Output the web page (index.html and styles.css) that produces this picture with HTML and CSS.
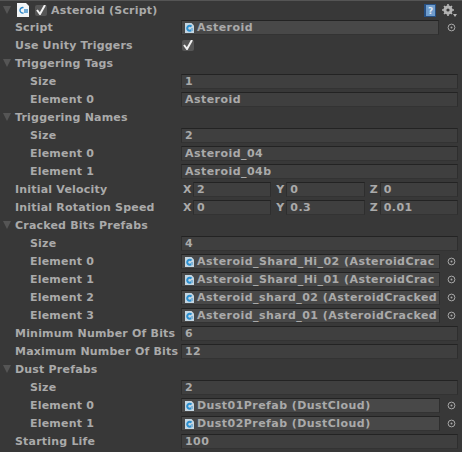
FILE: index.html

```html
<!DOCTYPE html>
<html lang="en">
  <head>
    <meta charset="UTF-8" />
    <title>Asteroid (Script)</title>
    <link rel="stylesheet" href="styles.css">
  </head>
  <body>
    <svg width="0" height="0" class="defs">
      <symbol id="cs" viewBox="0 0 9 10">
        <path d="M0 0h6.5L9 2.500V10H0z" fill="#c4d6e2"/>
        <path d="M6.500 3.500A2.500 2.500 0 1 0 6.500 7" fill="none" stroke="#2a8fd0" stroke-width="2"/>
        <path d="M6 5h2v3H6z" fill="#7fb4d8"/>
      </symbol>
      <symbol id="pick" viewBox="0 0 9 9">
        <circle cx="4.500" cy="4.500" r="3.400" fill="none" stroke="#a8a8a8"/>
        <circle cx="4.500" cy="4.500" r="1" fill="#a8a8a8"/>
      </symbol>
    </svg>

    <div class="inspector">
      <div class="header">
        <span class="arrow"></span>
        <svg class="header-script" width="12" height="14" viewBox="0 0 12 14">
          <path d="M0 0h9l3 3v11H0z" fill="#f2f5f7"/>
          <path d="M6.500 4.600A2.800 2.800 0 1 0 6.500 10" fill="none" stroke="#2a86c8" stroke-width="1.400"/>
          <path d="M8 6v4M10 6v4M7 7h4M7 9h4" stroke="#2a86c8" stroke-width=".8"/>
        </svg>
        <span class="check">
          <svg width="10" height="10" viewBox="0 0 10 10"><path d="M1 5l3 4 5-9" fill="none" stroke="#f0f0f0" stroke-width="2"/></svg>
        </span>
        <span class="header-title">Asteroid (Script)</span>
        <svg class="help" width="12" height="13" viewBox="0 0 12 13">
          <rect width="12" height="13" fill="#264f82"/>
          <rect x="2" y="1" width="9" height="11" fill="#6f9ccc"/>
          <text x="4" y="10" class="help-mark">?</text>
        </svg>
        <svg class="gear" width="15" height="13" viewBox="0 0 15 13">
          <circle cx="6" cy="6" r="3.400" fill="none" stroke="#b4b4b4" stroke-width="2.400"/>
          <path d="M6 0v12M0 6h12M2 2l8 8M10 2l-8 8" stroke="#b4b4b4" stroke-width="1.600"/>
          <circle cx="6" cy="6" r="1.600" fill="#383838"/>
          <path d="M11 10h4l-2 3z" fill="#b4b4b4"/>
        </svg>
      </div>

      <div class="row">
        <span class="label">Script</span>
        <span class="field obj script-field"><svg class="cs"><use href="#cs"/></svg>Asteroid</span>
        <svg class="picker"><use href="#pick"/></svg>
      </div>
      <div class="row">
        <span class="label">Use Unity Triggers</span>
        <span class="check check-field">
          <svg width="10" height="10" viewBox="0 0 10 10"><path d="M1 5l3 4 5-9" fill="none" stroke="#f0f0f0" stroke-width="2"/></svg>
        </span>
      </div>

      <div class="row"><span class="arrow"></span><span class="label fold">Triggering Tags</span></div>
      <div class="row"><span class="label sub">Size</span><span class="field">1</span></div>
      <div class="row"><span class="label sub">Element 0</span><span class="field">Asteroid</span></div>

      <div class="row"><span class="arrow"></span><span class="label fold">Triggering Names</span></div>
      <div class="row"><span class="label sub">Size</span><span class="field">2</span></div>
      <div class="row"><span class="label sub">Element 0</span><span class="field">Asteroid_04</span></div>
      <div class="row"><span class="label sub">Element 1</span><span class="field">Asteroid_04b</span></div>

      <div class="row">
        <span class="label">Initial Velocity</span>
        <div class="vector">
          <span class="axis">X</span><span class="field">2</span>
          <span class="axis">Y</span><span class="field">0</span>
          <span class="axis">Z</span><span class="field">0</span>
        </div>
      </div>
      <div class="row">
        <span class="label">Initial Rotation Speed</span>
        <div class="vector">
          <span class="axis">X</span><span class="field">0</span>
          <span class="axis">Y</span><span class="field">0.3</span>
          <span class="axis">Z</span><span class="field">0.01</span>
        </div>
      </div>

      <div class="row"><span class="arrow"></span><span class="label fold">Cracked Bits Prefabs</span></div>
      <div class="row"><span class="label sub">Size</span><span class="field">4</span></div>
      <div class="row">
        <span class="label sub">Element 0</span>
        <span class="field obj"><svg class="cs"><use href="#cs"/></svg>Asteroid_Shard_Hi_02 (AsteroidCrac</span>
        <svg class="picker"><use href="#pick"/></svg>
      </div>
      <div class="row">
        <span class="label sub">Element 1</span>
        <span class="field obj"><svg class="cs"><use href="#cs"/></svg>Asteroid_Shard_Hi_01 (AsteroidCrac</span>
        <svg class="picker"><use href="#pick"/></svg>
      </div>
      <div class="row">
        <span class="label sub">Element 2</span>
        <span class="field obj"><svg class="cs"><use href="#cs"/></svg>Asteroid_shard_02 (AsteroidCracked</span>
        <svg class="picker"><use href="#pick"/></svg>
      </div>
      <div class="row">
        <span class="label sub">Element 3</span>
        <span class="field obj"><svg class="cs"><use href="#cs"/></svg>Asteroid_shard_01 (AsteroidCracked</span>
        <svg class="picker"><use href="#pick"/></svg>
      </div>

      <div class="row"><span class="label">Minimum Number Of Bits</span><span class="field">6</span></div>
      <div class="row"><span class="label">Maximum Number Of Bits</span><span class="field">12</span></div>

      <div class="row"><span class="arrow"></span><span class="label fold">Dust Prefabs</span></div>
      <div class="row"><span class="label sub">Size</span><span class="field">2</span></div>
      <div class="row">
        <span class="label sub">Element 0</span>
        <span class="field obj"><svg class="cs"><use href="#cs"/></svg>Dust01Prefab (DustCloud)</span>
        <svg class="picker"><use href="#pick"/></svg>
      </div>
      <div class="row">
        <span class="label sub">Element 1</span>
        <span class="field obj"><svg class="cs"><use href="#cs"/></svg>Dust02Prefab (DustCloud)</span>
        <svg class="picker"><use href="#pick"/></svg>
      </div>

      <div class="row"><span class="label">Starting Life</span><span class="field">100</span></div>
    </div>
  </body>
</html>
```

FILE: styles.css

```css
html,
body {
  margin: 0;
  height: 100%;
  background-color: #383838;
  overflow: hidden;
}
.defs {
  display: block;
  height: 0;
}
.inspector {
  width: 462px;
  height: 452px;
  box-sizing: border-box;
  border-top: 1px solid #555;
  font-family: "DejaVu Sans", sans-serif;
  font-size: 11px;
  font-weight: bold;
  letter-spacing: 0.2px;
  color: #aaa;
}
.header {
  display: flex;
  align-items: center;
  height: 17px;
  padding: 1px 5px 0 0;
  box-sizing: border-box;
}
.header-script {
  margin-left: 6px;
}
.header .check {
  margin-left: 6px;
}
.header-title {
  margin-left: 4px;
  flex: 1;
}
.help-mark {
  font-size: 9px;
  fill: #dfe8f2;
}
.gear {
  margin-left: 6px;
}
.row {
  display: flex;
  align-items: center;
  height: 18px;
  padding-right: 4px;
  box-sizing: border-box;
}
.label {
  width: 181px;
  padding-left: 15px;
  box-sizing: border-box;
  flex-shrink: 0;
  white-space: nowrap;
}
.label.sub {
  padding-left: 30px;
}
.label.fold {
  width: 170px;
  padding-left: 4px;
}
.arrow {
  width: 0;
  height: 0;
  margin-left: 3px;
  border-left: 4px solid transparent;
  border-right: 4px solid transparent;
  border-top: 8px solid #555;
  flex-shrink: 0;
}
.field {
  flex: 1;
  min-width: 0;
  height: 15px;
  line-height: 14px;
  padding-left: 3px;
  background-color: #3f3f3f;
  border: 1px solid #2e2e2e;
  border-top-color: #232323;
  border-bottom-color: #333;
  box-sizing: border-box;
  letter-spacing: 0.45px;
  white-space: nowrap;
  overflow: hidden;
}
.obj {
  flex: none;
  width: 259px;
  display: flex;
  align-items: center;
  padding-left: 3px;
  padding-top: 1px;
  background-color: #484848;
}
.script-field {
  width: 258px;
}
.cs {
  width: 9px;
  height: 10px;
  margin-right: 3px;
  flex-shrink: 0;
}
.picker {
  width: 9px;
  height: 9px;
  margin-left: 7px;
}
.script-field + .picker {
  margin-left: 8px;
}
.check {
  display: flex;
  align-items: center;
  justify-content: center;
  width: 12px;
  height: 11px;
  background-color: #555;
  border-radius: 2px;
  flex-shrink: 0;
}
.check-field {
  margin-left: 1px;
}
.vector {
  flex: 1;
  display: flex;
  align-items: center;
}
.vector .axis {
  width: 12px;
  padding-left: 2px;
  box-sizing: border-box;
}
.vector .field {
  margin-right: 3px;
}
.vector .field:last-child {
  margin-right: 0;
}
```
